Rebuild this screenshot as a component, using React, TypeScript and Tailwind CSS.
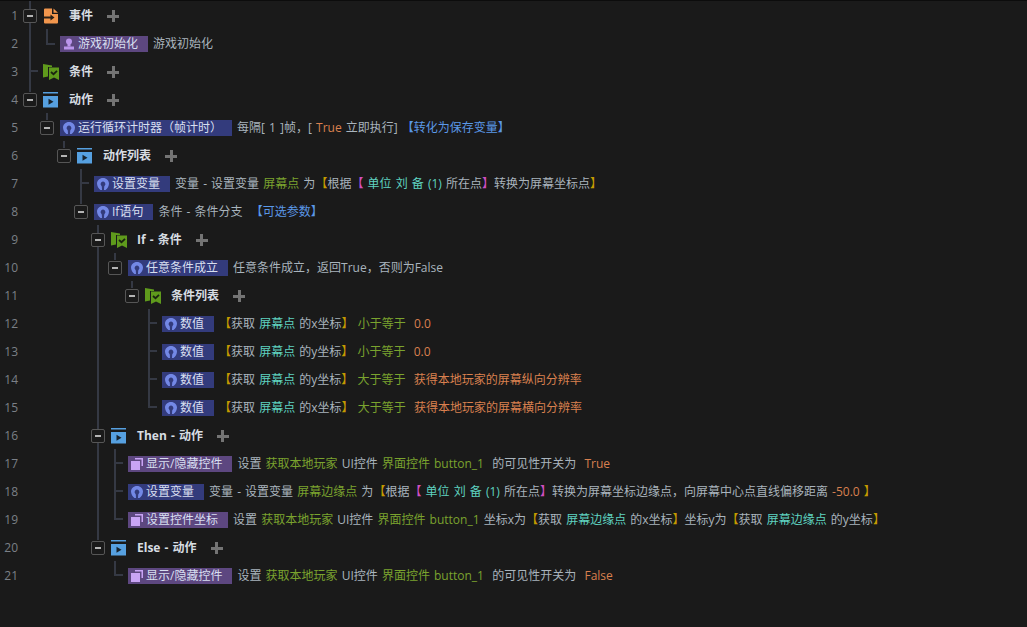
import React from "react";

type Seg = [string, string?];

const GREEN = "text-[#7aa32e]";
const CYAN = "text-[#5fd3c0]";
const ORANGE = "text-[#d9804f]";
const GOLD = "text-[#c49a00]";
const PINK = "text-[#d04fc0]";
const BLUE = "text-[#5a98e8]";

type RowData = {
  depth: number;
  toggle?: boolean;
  section?: "event" | "cond" | "act";
  title?: string;
  chip?: { icon: "user" | "logic" | "ui"; text: string };
  desc?: Seg[];
};

const getX = (axis: string, name: string, tail: Seg[] = []): Seg[] => [
  ["【", GOLD],
  ["获取 "],
  [name, CYAN],
  [` 的${axis}坐标`],
  ["】", GOLD],
  ...tail,
];

const ROWS: RowData[] = [
  { depth: 0, toggle: true, section: "event", title: "事件" },
  { depth: 1, chip: { icon: "user", text: "游戏初始化" }, desc: [["游戏初始化"]] },
  { depth: 0, section: "cond", title: "条件" },
  { depth: 0, toggle: true, section: "act", title: "动作" },
  {
    depth: 1,
    toggle: true,
    chip: { icon: "logic", text: "运行循环计时器（帧计时）" },
    desc: [["每隔[ 1 ]帧，[ "], ["True", ORANGE], [" 立即执行] "], ["【转化为保存变量】", BLUE]],
  },
  { depth: 2, toggle: true, section: "act", title: "动作列表" },
  {
    depth: 3,
    chip: { icon: "logic", text: "设置变量" },
    desc: [
      ["变量 - 设置变量 "],
      ["屏幕点", GREEN],
      [" 为"],
      ["【", GOLD],
      ["根据"],
      ["【", PINK],
      [" 单位 刘 备 (1)", CYAN],
      [" 所在点"],
      ["】", PINK],
      ["转换为屏幕坐标点"],
      ["】", GOLD],
    ],
  },
  {
    depth: 3,
    toggle: true,
    chip: { icon: "logic", text: "If语句" },
    desc: [["条件 - 条件分支  "], ["【可选参数】", BLUE]],
  },
  { depth: 4, toggle: true, section: "cond", title: "If - 条件" },
  {
    depth: 5,
    toggle: true,
    chip: { icon: "logic", text: "任意条件成立" },
    desc: [["任意条件成立，返回True，否则为False"]],
  },
  { depth: 6, toggle: true, section: "cond", title: "条件列表" },
  {
    depth: 7,
    chip: { icon: "logic", text: "数值" },
    desc: getX("x", "屏幕点", [[" 小于等于  ", GREEN], ["0.0", ORANGE]]),
  },
  {
    depth: 7,
    chip: { icon: "logic", text: "数值" },
    desc: getX("y", "屏幕点", [[" 小于等于  ", GREEN], ["0.0", ORANGE]]),
  },
  {
    depth: 7,
    chip: { icon: "logic", text: "数值" },
    desc: getX("y", "屏幕点", [[" 大于等于  ", GREEN], ["获得本地玩家的屏幕纵向分辨率", ORANGE]]),
  },
  {
    depth: 7,
    chip: { icon: "logic", text: "数值" },
    desc: getX("x", "屏幕点", [[" 大于等于  ", GREEN], ["获得本地玩家的屏幕横向分辨率", ORANGE]]),
  },
  { depth: 4, toggle: true, section: "act", title: "Then - 动作" },
  {
    depth: 5,
    chip: { icon: "ui", text: "显示/隐藏控件" },
    desc: [
      ["设置 "],
      ["获取本地玩家", GREEN],
      [" UI控件 "],
      ["界面控件 button_1", GREEN],
      ["  的可见性开关为  "],
      ["True", ORANGE],
    ],
  },
  {
    depth: 5,
    chip: { icon: "logic", text: "设置变量" },
    desc: [
      ["变量 - 设置变量 "],
      ["屏幕边缘点", GREEN],
      [" 为"],
      ["【", GOLD],
      ["根据"],
      ["【", PINK],
      [" 单位 刘 备 (1)", CYAN],
      [" 所在点"],
      ["】", PINK],
      ["转换为屏幕坐标边缘点，向屏幕中心点直线偏移距离 "],
      ["-50.0", ORANGE],
      [" 】", GOLD],
    ],
  },
  {
    depth: 5,
    chip: { icon: "ui", text: "设置控件坐标" },
    desc: [
      ["设置 "],
      ["获取本地玩家", GREEN],
      [" UI控件 "],
      ["界面控件 button_1", GREEN],
      [" 坐标x为"],
      ...getX("x", "屏幕边缘点"),
      ["坐标y为"],
      ...getX("y", "屏幕边缘点"),
    ],
  },
  { depth: 4, toggle: true, section: "act", title: "Else - 动作" },
  {
    depth: 5,
    chip: { icon: "ui", text: "显示/隐藏控件" },
    desc: [
      ["设置 "],
      ["获取本地玩家", GREEN],
      [" UI控件 "],
      ["界面控件 button_1", GREEN],
      ["  的可见性开关为  "],
      ["False", ORANGE],
    ],
  },
];

// tree connectors: x, y, width, height
const LINES: [number, number, number, number][] = [
  [29, 0, 2, 92],
  [46, 29, 2, 15],
  [46, 43, 9, 2],
  [29, 70, 9, 2],
  [46, 113, 2, 7],
  [63, 141, 2, 7],
  [80, 169, 2, 35],
  [80, 182, 9, 2],
  [97, 225, 2, 315],
  [114, 253, 2, 7],
  [131, 281, 2, 7],
  [148, 309, 2, 99],
  [148, 322, 9, 2],
  [148, 350, 9, 2],
  [148, 378, 9, 2],
  [148, 406, 9, 2],
  [114, 449, 2, 71],
  [114, 462, 9, 2],
  [114, 490, 9, 2],
  [114, 518, 9, 2],
  [114, 561, 2, 15],
  [114, 574, 9, 2],
];

function SectionIcon({ kind }: { kind: "event" | "cond" | "act" }) {
  if (kind === "event") {
    return (
      <svg width="16" height="16" viewBox="0 0 16 16" className="shrink-0">
        <path d="M1 1.500a1 1 0 0 1 1-1h7v5.500h6v8.500a1 1 0 0 1-1 1H2a1 1 0 0 1-1-1z" fill="#f2964d" />
        <path d="M10.500 .500l4.500 4.300h-4.500z" fill="#f2964d" />
        <path d="M1 8.500h6.500V6.500l4 3-4 3V10.500H1z" fill="#2a2118" />
      </svg>
    );
  }
  if (kind === "cond") {
    return (
      <svg width="16" height="16" viewBox="0 0 16 16" className="shrink-0">
        <path d="M0 0l9 1.500V3H5v9.500l-5 1z" fill="#5f9a1c" />
        <path d="M6 3.500h10V16l-5-2.500L6 16z" fill="#5f9a1c" />
        <path d="M8 8l2.500 2.200L14 6.800" fill="none" stroke="#1a2410" strokeWidth="1.800" />
      </svg>
    );
  }
  return (
    <svg width="16" height="16" viewBox="0 0 16 16" className="shrink-0">
      <rect x="0" y="0" width="15" height="1.500" fill="#56a0e0" />
      <rect x="0" y="4" width="15" height="11.500" fill="#56a0e0" />
      <path d="M5.500 6.800l5 3-5 3z" fill="#17222c" />
    </svg>
  );
}

function ChipIcon({ kind }: { kind: "user" | "logic" | "ui" }) {
  if (kind === "user") {
    return (
      <svg width="12" height="12" viewBox="0 0 12 12" className="shrink-0">
        <circle cx="6" cy="3.500" r="3" fill="#bb95ec" />
        <rect x="4.500" y="5.500" width="3" height="3" fill="#bb95ec" />
        <rect x="1" y="8.500" width="10" height="3" fill="#bb95ec" />
      </svg>
    );
  }
  if (kind === "ui") {
    return (
      <svg width="12" height="12" viewBox="0 0 12 12" className="shrink-0">
        <path d="M4 0h8v8h-1.500V1.500H4z" fill="#c9a4f5" />
        <rect x="0" y="3" width="9" height="9" fill="#c9a4f5" />
      </svg>
    );
  }
  return (
    <svg width="12" height="12" viewBox="0 0 12 12" className="shrink-0">
      <path
        d="M6 0C2.500 0 0 2.500 0 5.500 0 8 1.500 10.500 3.500 12H5L4.800 8.500 3.600 6.500C3.600 4.800 4.800 3.500 6 3.500s2.400 1.300 2.400 3L7.200 8.500 7 12h1.500C10.500 10.500 12 8 12 5.500 12 2.500 9.500 0 6 0z"
        fill="#7388e6"
      />
    </svg>
  );
}

function Toggle() {
  return (
    <span className="relative z-10 flex h-[14px] w-[14px] items-center justify-center rounded-[2px] border border-[#565656] bg-[#1a1a1a]">
      <span className="h-[2px] w-[6px] bg-[#b4b4b4]" />
    </span>
  );
}

function Plus() {
  return (
    <span className="relative ml-[14px] h-[12px] w-[12px] shrink-0">
      <span className="absolute left-0 top-[4.500px] h-[3px] w-[12px] bg-[#747474]" />
      <span className="absolute left-[4.500px] top-0 h-[12px] w-[3px] bg-[#747474]" />
    </span>
  );
}

function Row({ row, n }: { row: RowData; n: number }) {
  return (
    <div className="flex h-[28px] items-center whitespace-pre">
      <span className="w-[23px] shrink-0 pr-[5px] text-right text-[#7b8087]">{n}</span>
      {Array.from({ length: row.depth }).map((_, i) => (
        <span key={i} className="w-[17px] shrink-0" />
      ))}
      <span className="w-[17px] shrink-0">{row.toggle && <Toggle />}</span>
      {row.section && (
        <>
          <span className="relative z-10 ml-[3px] flex w-[16px]">
            <SectionIcon kind={row.section} />
          </span>
          <span className="ml-[10px] font-bold text-[#d7dde2]">{row.title}</span>
          <Plus />
        </>
      )}
      {row.chip && (
        <span
          className={
            row.chip.icon === "logic"
              ? "ml-[3px] flex h-[16px] items-center bg-[#333b7c] pl-[3px] pr-[10px] text-[#d8dff0]"
              : "ml-[3px] flex h-[16px] items-center bg-[#5d4780] pl-[3px] pr-[10px] text-[#d8dff0]"
          }
        >
          <ChipIcon kind={row.chip.icon} />
          <span className="ml-[3px]">{row.chip.text}</span>
        </span>
      )}
      {row.desc && (
        <span className="ml-[5px] text-[#a9b4bd]">
          {row.desc.map(([text, color], i) => (
            <span key={i} className={color}>
              {text}
            </span>
          ))}
        </span>
      )}
    </div>
  );
}

export default function App() {
  return (
    <div className="relative h-[627px] w-[1027px] overflow-hidden border-t border-[#0c0c0c] bg-[#1a1a1a] pt-[1px] font-['Open_Sans','Noto_Sans_CJK_SC',sans-serif] text-[12px] leading-[16px] [word-spacing:1px]">
      {LINES.map(([x, y, w, h], i) => (
        <span
          key={i}
          className="absolute bg-[#353944]"
          style={{ left: x, top: y - 1, width: w, height: h }}
        />
      ))}
      {ROWS.map((row, i) => (
        <Row key={i} row={row} n={i + 1} />
      ))}
    </div>
  );
}
